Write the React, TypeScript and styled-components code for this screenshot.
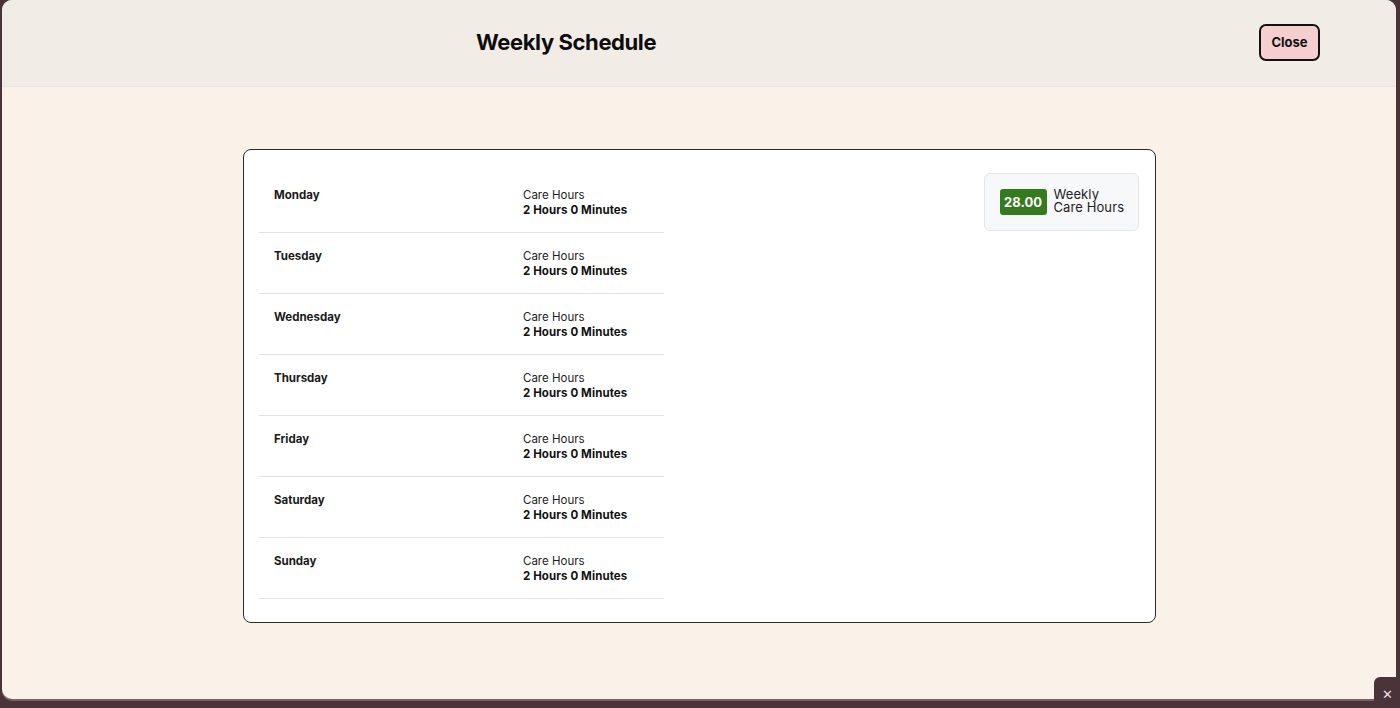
import styled, { createGlobalStyle } from 'styled-components';

const GlobalStyle = createGlobalStyle`
  html, body {
    margin: 0;
    padding: 0;
    height: 100%;
    background: #4a343a;
    font-family: Inter, "Noto Sans", "Liberation Sans", sans-serif;
    color: #111;
  }
  #root {
    height: 100%;
  }
`;

const Page = styled.div`
  height: 708px;
  padding: 0 4px 0 2px;
  box-sizing: border-box;
  overflow: hidden;
`;

const Modal = styled.div`
  height: 699px;
  border-radius: 10px;
  background: #faf2e9;
  overflow: hidden;
  display: flex;
  flex-direction: column;
  box-shadow: 0 2px 0 #7a6067;
`;

const Header = styled.header`
  height: 87px;
  box-sizing: border-box;
  flex-shrink: 0;
  display: flex;
  align-items: center;
  justify-content: space-between;
  padding: 0 76px 2px 474px;
  background: #f1ede6;
  border-bottom: 1px solid #ece6dd;
`;

const Title = styled.h1`
  margin: 0;
  font-size: 22px;
  font-weight: 700;
  letter-spacing: -0.4px;
  color: #0d0d0d;
`;

const CloseButton = styled.button`
  width: 61px;
  height: 37px;
  border: 2px solid #111;
  border-radius: 7px;
  background: #f5cfd0;
  font-family: inherit;
  font-size: 13px;
  font-weight: 700;
  color: #111;
  cursor: pointer;
`;

const Body = styled.main`
  flex: 1;
  display: flex;
  justify-content: center;
  padding-top: 62px;
`;

const Card = styled.section`
  width: 913px;
  height: 474px;
  box-sizing: border-box;
  display: flex;
  justify-content: space-between;
  align-items: flex-start;
  padding: 22px 16px 23px 15px;
  background: #fff;
  border: 1px solid #2b2b2b;
  border-radius: 8px;
`;

const DayList = styled.ul`
  list-style: none;
  margin: 0;
  padding: 0;
  width: 405px;
`;

const DayRow = styled.li`
  display: grid;
  grid-template-columns: 249px 1fr;
  padding: 16px 16px 14px 15.5px;
  border-bottom: 1px solid #e3e3e3;
  font-size: 11.5px;
  line-height: 15px;
`;

const DayName = styled.span`
  font-weight: 700;
  color: #1a1a1a;
`;

const CareInfo = styled.div`
  display: flex;
  flex-direction: column;
`;

const CareLabel = styled.span`
  color: #222;
`;

const CareValue = styled.span`
  font-weight: 700;
  color: #111;
  letter-spacing: 0.1px;
`;

const TotalBox = styled.div`
  width: 155px;
  height: 58px;
  box-sizing: border-box;
  display: flex;
  align-items: center;
  gap: 7px;
  padding: 0 15px;
  margin-top: 1px;
  background: #f7f8fa;
  border: 1px solid #e4e6ea;
  border-radius: 6px;
`;

const TotalPill = styled.span`
  display: inline-flex;
  align-items: center;
  justify-content: center;
  flex-shrink: 0;
  width: 47px;
  height: 26px;
  border-radius: 3px;
  background: #367a20;
  color: #fff;
  font-size: 13px;
  font-weight: 700;
`;

const TotalLabel = styled.span`
  white-space: nowrap;
  font-size: 13px;
  line-height: 13px;
  letter-spacing: 0.1px;
  color: #222;
  margin-top: -2px;
`;

const LabelLine = styled.span`
  display: block;
  height: 13px;
`;

const CornerTab = styled.div`
  position: fixed;
  right: 0;
  bottom: 0;
  width: 26px;
  height: 31px;
  display: flex;
  align-items: center;
  justify-content: center;
  padding-top: 2px;
  box-sizing: border-box;
  background: #4a343a;
  border-top-left-radius: 6px;
  color: #e8dfe0;
  font-size: 13px;
`;

const days = ['Monday', 'Tuesday', 'Wednesday', 'Thursday', 'Friday', 'Saturday', 'Sunday'];

export default function App() {
  return (
    <>
      <GlobalStyle />
      <Page>
        <Modal>
          <Header>
            <Title>Weekly Schedule</Title>
            <CloseButton>Close</CloseButton>
          </Header>
          <Body>
            <Card>
              <DayList>
                {days.map((day) => (
                  <DayRow key={day}>
                    <DayName>{day}</DayName>
                    <CareInfo>
                      <CareLabel>Care Hours</CareLabel>
                      <CareValue>2 Hours 0 Minutes</CareValue>
                    </CareInfo>
                  </DayRow>
                ))}
              </DayList>
              <TotalBox>
                <TotalPill>28.00</TotalPill>
                <TotalLabel>
                  <LabelLine>Weekly</LabelLine>
                  <LabelLine>Care Hours</LabelLine>
                </TotalLabel>
              </TotalBox>
            </Card>
          </Body>
        </Modal>
      </Page>
      <CornerTab>✕</CornerTab>
    </>
  );
}
